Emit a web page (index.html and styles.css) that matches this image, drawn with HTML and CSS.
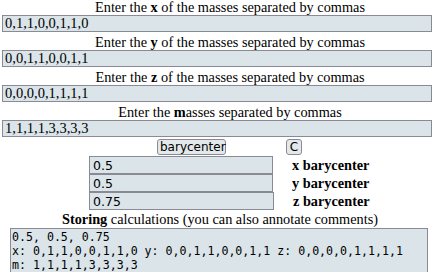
FILE: index.html
```html
<!DOCTYPE html>
<html>
<head>
<meta charset="utf-8">
<link rel="stylesheet" href="styles.css">
</head>
<body>
<div class="page">
  <div class="title">Enter the <b>x</b> of the masses separated by commas</div>
  <input class="data" type="text" value="0,1,1,0,0,1,1,0">
  <div class="title">Enter the <b>y</b> of the masses separated by commas</div>
  <input class="data" type="text" value="0,0,1,1,0,0,1,1">
  <div class="title">Enter the <b>z</b> of the masses separated by commas</div>
  <input class="data" type="text" value="0,0,0,0,1,1,1,1">
  <div class="title">Enter the <b>m</b>asses separated by commas</div>
  <input class="data" type="text" value="1,1,1,1,3,3,3,3">
  <div class="buttons">
    <button class="btn btn-bary">barycenter</button>
    <button class="btn btn-c">C</button>
  </div>
  <div class="results">
    <div class="res-row"><input class="res" type="text" value="0.5"><span class="res-label">x barycenter</span></div>
    <div class="res-row"><input class="res" type="text" value="0.5"><span class="res-label">y barycenter</span></div>
    <div class="res-row"><input class="res res-wide" type="text" value="0.75"><span class="res-label">z barycenter</span></div>
  </div>
  <div class="title store"><b>Storing</b> calculations (you can also annotate comments)</div>
  <textarea class="notes">0.5, 0.5, 0.75
x: 0,1,1,0,0,1,1,0 y: 0,0,1,1,0,0,1,1 z: 0,0,0,0,1,1,1,1
m: 1,1,1,1,3,3,3,3</textarea>
</div>
</body>
</html>
```

FILE: styles.css
```css
html, body {
  margin: 0;
  padding: 0;
  background: #ffffff;
}
body {
  font-family: "Liberation Serif", "Times New Roman", serif;
  font-size: 14.3px;
  color: #000;
  overflow: hidden;
}
.page {
  display: flex;
  flex-direction: column;
  width: 436px;
}
.title {
  text-align: center;
  line-height: 15px;
  height: 15px;
  padding-left: 24px;
  margin-bottom: 0;
}
.title b { font-weight: bold; }
.data {
  box-sizing: border-box;
  margin: 0 0 3px 2px;
  width: 430px;
  height: 17px;
  padding: 0 2px;
  border: 1px solid #8a8a96;
  background: #dae4e9;
  font-family: "Liberation Serif", "Times New Roman", serif;
  font-size: 14.5px;
  color: #000;
  outline: none;
}
.buttons {
  display: flex;
  height: 17px;
  margin-top: -1px;
  padding-left: 157px;
}
.btn {
  box-sizing: border-box;
  height: 16px;
  border: 1px solid #8a8a96;
  border-radius: 3px;
  background: #e3e8eb;
  font-family: "DejaVu Sans", Verdana, sans-serif;
  font-size: 12px;
  line-height: 12px;
  padding: 0 2px;
  color: #000;
}
.btn-bary { width: 69px; }
.btn-c { width: 16px; margin-left: 60px; padding: 0; }
.results {
  display: flex;
  flex-direction: column;
  padding-left: 89px;
}
.res-row {
  display: flex;
  align-items: center;
  height: 18px;
}
.res {
  box-sizing: border-box;
  width: 184px;
  height: 18px;
  margin: 0;
  padding: 0 3px;
  border: 1px solid #8a8a96;
  background: #dae4e9;
  font-family: "DejaVu Sans", Verdana, sans-serif;
  font-size: 12.5px;
  color: #000;
  outline: none;
}
.res-wide { width: 185px; }
.res-label {
  margin-left: 19px;
  font-weight: bold;
  font-size: 14.3px;
}
.store {
  padding-left: 4px;
  margin-top: 0;
  height: 18px;
  line-height: 18px;
}
.notes {
  box-sizing: border-box;
  margin: 0 0 0 10px;
  width: 418px;
  height: 60px;
  padding: 1px 1px;
  border: 1px solid #8a8a96;
  background: #dae4e9;
  font-family: "DejaVu Sans Mono", monospace;
  font-size: 11.6px;
  line-height: 14px;
  color: #000;
  resize: none;
  outline: none;
}
```
